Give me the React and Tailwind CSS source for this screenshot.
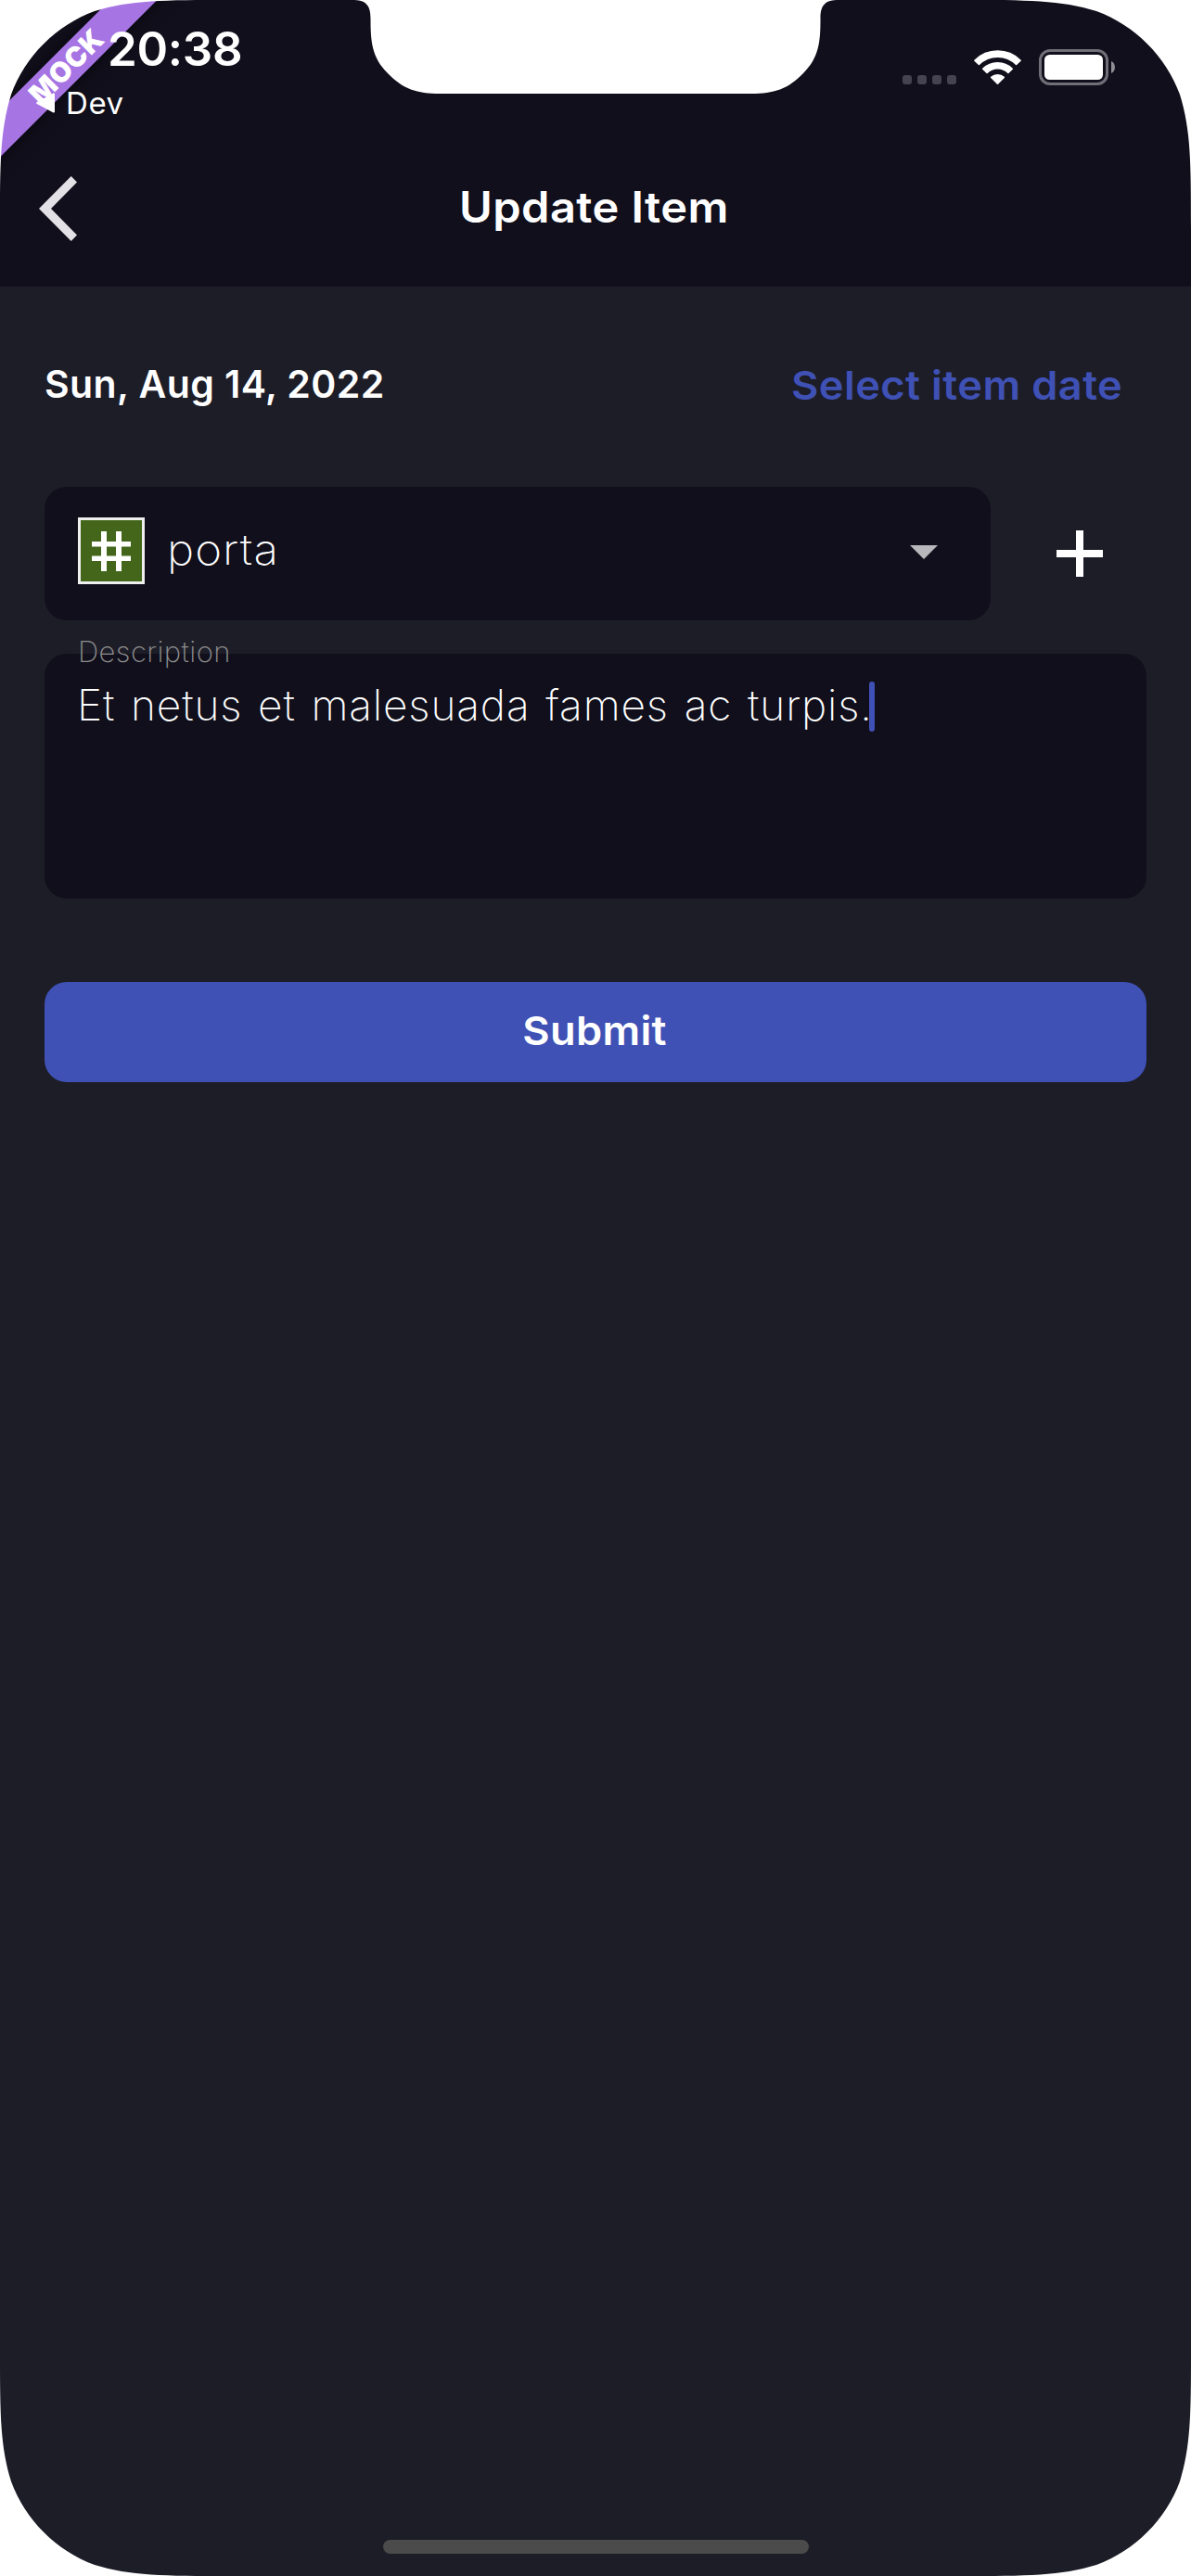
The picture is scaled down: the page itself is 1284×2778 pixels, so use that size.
import React from "react";

function MockRibbon() {
  return (
    <div className="absolute left-[-78px] top-[54px] flex h-9 w-[300px] -rotate-45 items-center justify-center bg-[#a674e3] pb-[3px] shadow-[0_0_18px_rgba(0,0,0,0.5)]">
      <span className="text-[30px] leading-none font-black tracking-[0.5px]">MOCK</span>
    </div>
  );
}

function SignalDots() {
  return (
    <div className="mb-px flex gap-1.5">
      {[0, 1, 2, 3].map((i) => (
        <span key={i} className="h-2.5 w-2.5 rounded-[3px] bg-[#45434f]" />
      ))}
    </div>
  );
}

function WifiIcon() {
  return (
    <svg className="ml-[19px] h-[38px] w-[51px]" viewBox="0 0 51 38" fill="#fff" stroke="#fff" strokeWidth="1.6" strokeLinejoin="round">
      <path d="M0.9 11.2 A35 35 0 0 1 50.1 11.2 L45.6 15.4 A28.5 28.5 0 0 0 5.4 15.4 Z" />
      <path d="M9.7 20.2 A22.5 22.5 0 0 1 41.3 20.2 L36.9 24.4 A16 16 0 0 0 14.1 24.4 Z" />
      <path d="M18.7 29.4 A10.5 10.5 0 0 1 32.3 29.4 L25.5 36.1 Z" />
    </svg>
  );
}

function BatteryIcon() {
  return (
    <svg className="ml-[19px] h-[39px] w-[83px]" viewBox="0 0 83 39">
      <rect x="1.5" y="1.5" width="72" height="36" rx="10.5" fill="none" stroke="#706f77" strokeWidth="3" />
      <rect x="6" y="6" width="63" height="27" rx="5.5" fill="#fff" />
      <path d="M78 13 C83.3 15 83.3 24 78 26 Z" fill="#8f8e94" />
    </svg>
  );
}

function StatusBar() {
  return (
    <div className="relative flex h-[141px] justify-between">
      <div>
        <div className="ml-[116px] mt-[23px] h-[60px] text-[51px] leading-[60px] font-semibold tracking-[-0.3px]">20:38</div>
        <div className="mt-[8px] ml-[39px] flex h-10 items-center">
          <svg className="h-[22px] w-5" viewBox="0 0 20 22" fill="#fff" stroke="#fff" strokeWidth="2" strokeLinejoin="round">
            <path d="M1.2 11 L19 1.4 V20.6 Z" />
          </svg>
          <span className="ml-3 text-[33px] leading-10 tracking-[0.6px]">Dev</span>
        </div>
      </div>
      <div className="mt-[53px] mr-[81px] flex h-[39px] items-end">
        <SignalDots />
        <WifiIcon />
        <BatteryIcon />
      </div>
    </div>
  );
}

function NavBar() {
  return (
    <div className="grid h-[168px] grid-cols-[200px_1fr_200px] items-center">
      <svg className="ml-[42px] h-[70px] w-[41px]" viewBox="0 0 41 70" fill="#e3e1e6">
        <path d="M34.7 0 L41 6.5 L13 35 L41 63.5 L34.7 70 L0 35 Z" />
      </svg>
      <h1 className="scale-x-[1.06] pr-[3px] pb-1 text-center text-[46px] leading-[60px] font-semibold tracking-[0.4px]">Update Item</h1>
    </div>
  );
}

function DateRow() {
  return (
    <div className="mt-[75px] flex h-[60px] items-center justify-between pr-[26px]">
      <span className="text-[41px] leading-[60px] font-semibold tracking-[0.4px]">Sun, Aug 14, 2022</span>
      <button className="origin-right scale-x-[1.05] pt-px text-[43px] leading-[60px] font-semibold tracking-[0.4px] text-[#3f51b5]">
        Select item date
      </button>
    </div>
  );
}

function CategoryRow() {
  return (
    <div className="mt-[81px] flex h-36 items-center">
      <div className="flex h-36 w-[1020px] items-center rounded-3xl bg-[#100f1b] pr-[57px] pl-9">
        <div className="mb-1.5 flex h-[72px] w-[72px] items-center justify-center border-[3px] border-[#efefef] bg-[#43661a]">
          <svg className="h-[43px] w-[42px]" viewBox="0 0 42 43" fill="#fff">
            <path d="M10 0h6v43h-6z M26 0h6v43h-6z M0 11h42v5.5H0z M0 26.5h42v5.5H0z" />
          </svg>
        </div>
        <span className="mb-2.5 ml-6 origin-left scale-x-[1.07] text-[46px] leading-[60px] font-extralight tracking-[1px]">porta</span>
        <svg className="mb-[3px] ml-auto h-[15px] w-[30px]" viewBox="0 0 30 15" fill="#b8b7bb">
          <path d="M0 0h30L15 15z" />
        </svg>
      </div>
      <svg className="ml-[71px] h-[50px] w-[50px]" viewBox="0 0 50 50" fill="#fff">
        <path d="M21 0h8v21h21v8H29v21h-8V29H0v-8h21z" />
      </svg>
    </div>
  );
}

function DescriptionField() {
  return (
    <div className="mt-9 h-[264px] rounded-3xl bg-[#100f1b] pl-9">
      <div className="-mt-0.5">
        <label className="relative -top-[18px] block h-9 text-[31px] leading-9 font-extralight tracking-[0.4px] text-[#8e8e8e]">Description</label>
      </div>
      <div className="-mt-1 flex h-[54px] items-center whitespace-nowrap">
        <span className="-ml-px pb-1 text-[46px] leading-[50px] font-extralight tracking-[0.85px] [word-spacing:3px]">
          Et netus et malesuada fames ac turpis.
        </span>
        <span className="-ml-1 h-[54px] w-1.5 rounded-full bg-[#3f51b5]" />
      </div>
    </div>
  );
}

/* Device outline: continuous rounded corners and the top notch. */
function DeviceMask() {
  return (
    <svg className="pointer-events-none absolute inset-0 h-[2778px] w-[1284px]" viewBox="0 0 1284 2778" fill="#fff">
      <defs>
        <path id="corner" d="M-1 -1 H248 V0 C176 0 141 0 102 12 C60.4 27.4 27.4 60.4 12 102 C0 141 0 176 0 248 H-1 Z" />
      </defs>
      <use href="#corner" />
      <use href="#corner" transform="translate(1284 0) scale(-1 1)" />
      <use href="#corner" transform="translate(0 2778) scale(1 -1)" />
      <use href="#corner" transform="translate(1284 2778) scale(-1 -1)" />
      <path d="M380 0 C394 0 399.5 5 399.5 20 C399.5 45 401 62 418 79 C434 96 450 101 474 101 H810 C834 101 850 96 866 79 C883 62 884.5 45 884.5 20 C884.5 5 890 0 904 0 Z" />
    </svg>
  );
}

export default function App() {
  return (
    <div className="relative flex h-[2778px] w-[1284px] flex-col overflow-hidden bg-[#1d1d28] font-['Inter',sans-serif] text-white">
      <header className="relative h-[309px] bg-[#100f1b]">
        <MockRibbon />
        <StatusBar />
        <NavBar />
      </header>
      <main className="flex flex-col px-12">
        <DateRow />
        <CategoryRow />
        <DescriptionField />
        <button className="mt-[90px] h-[108px] rounded-3xl bg-[#3f51b5] pr-0.5 pb-1 text-[43px] leading-[60px] font-semibold tracking-[0.3px]">
          <span className="inline-block scale-x-[1.05]">Submit</span>
        </button>
      </main>
      <div className="mt-auto mb-6 ml-[413px] h-[15px] w-[459px] rounded-full bg-[#4b4b4b]" />
      <DeviceMask />
    </div>
  );
}
